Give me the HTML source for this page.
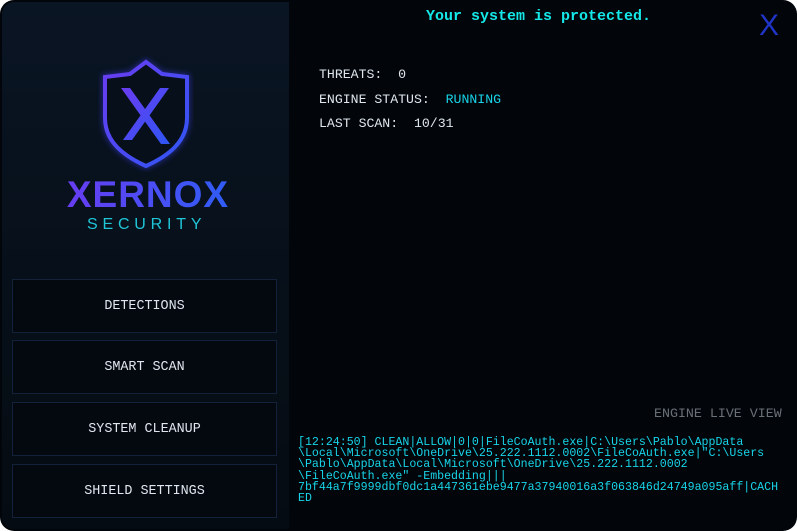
<!DOCTYPE html>
<html><head><meta charset="utf-8"><style>
html,body{margin:0;padding:0;background:#fff;}
.win{position:relative;width:797px;height:531px;background:#02060a;border-radius:14px;overflow:hidden;font-family:"Liberation Mono",monospace;}
.side{position:absolute;left:2px;top:2px;width:287px;height:527px;border-radius:12px 0 0 12px;background:linear-gradient(180deg,#0a1524 0%,#07101a 50%,#050b12 100%);}
.btn{position:absolute;left:10px;width:263px;height:52px;border:1px solid #13223a;background:#040910;color:#dfe6ee;font-size:13.4px;text-align:center;line-height:54px;}
.logo{position:absolute;left:58px;top:176px;width:176px;font-family:"Liberation Sans",sans-serif;font-weight:bold;font-size:37px;letter-spacing:1px;text-align:center;line-height:34px;background:linear-gradient(90deg,#6a3cf2,#2d5ef6);-webkit-background-clip:text;color:transparent;}
.sec{position:absolute;left:85px;top:214px;width:126px;font-family:"Liberation Sans",sans-serif;font-size:16px;letter-spacing:4.8px;color:#1fc6d8;line-height:18px;}
.title{position:absolute;left:426px;top:8px;color:#15e8e8;font-weight:bold;font-size:15px;}
.close{position:absolute;left:759px;top:10px;color:#2034c8;font-family:"Liberation Sans",sans-serif;font-size:30px;line-height:32px;}
.st{position:absolute;left:319px;color:#dfe6ee;font-size:13.2px;white-space:pre;}
.elv{position:absolute;left:654px;top:406px;color:#6a7078;font-size:13.3px;}
.log{position:absolute;left:298px;top:437px;width:495px;color:#18d4e8;font-size:11.6px;line-height:11.2px;white-space:pre;}
</style></head><body>
<div class="win">
<div class="side">
<svg style="position:absolute;left:96px;top:54px" width="96" height="116" viewBox="0 0 96 116">
<defs><linearGradient id="g" x1="0" y1="0" x2="1" y2="1"><stop offset="0" stop-color="#6b3cf2"/><stop offset="1" stop-color="#2e56f4"/></linearGradient>
<filter id="f"><feGaussianBlur stdDeviation="3"/></filter></defs>
<path d="M48 6 L64 18 L89 21 L89 62 C89 86 70 100 48 110 C26 100 7 86 7 62 L7 21 L32 18 Z" fill="none" stroke="#3a3cf0" stroke-width="6" filter="url(#f)" opacity="0.5"/>
<path d="M48 6 L64 18 L89 21 L89 62 C89 86 70 100 48 110 C26 100 7 86 7 62 L7 21 L32 18 Z" fill="#07101a" stroke="url(#g)" stroke-width="4"/>
<path d="M23 32 L32 32 L72 88 L63 88 Z" fill="url(#g)"/>
<path d="M71 32 L62 32 L25 84 L34 84 Z" fill="url(#g)"/>
</svg>
<div class="logo">XERNOX</div>
<div class="sec">SECURITY</div>
<div class="btn" style="top:277px">DETECTIONS</div>
<div class="btn" style="top:338px">SMART SCAN</div>
<div class="btn" style="top:400px">SYSTEM CLEANUP</div>
<div class="btn" style="top:462px">SHIELD SETTINGS</div>
</div>
<div class="title">Your system is protected.</div>
<div class="close">X</div>
<div class="st" style="top:67px">THREATS:  0</div>
<div class="st" style="top:92px">ENGINE STATUS:  <span style="color:#18d4e8">RUNNING</span></div>
<div class="st" style="top:116px">LAST SCAN:  10/31</div>
<div class="elv">ENGINE LIVE VIEW</div>
<div class="log">[12:24:50] CLEAN|ALLOW|0|0|FileCoAuth.exe|C:\Users\Pablo\AppData
\Local\Microsoft\OneDrive\25.222.1112.0002\FileCoAuth.exe|"C:\Users
\Pablo\AppData\Local\Microsoft\OneDrive\25.222.1112.0002
\FileCoAuth.exe" -Embedding|||
7bf44a7f9999dbf0dc1a447361ebe9477a37940016a3f063846d24749a095aff|CACH
ED</div>
</div>
</body></html>
